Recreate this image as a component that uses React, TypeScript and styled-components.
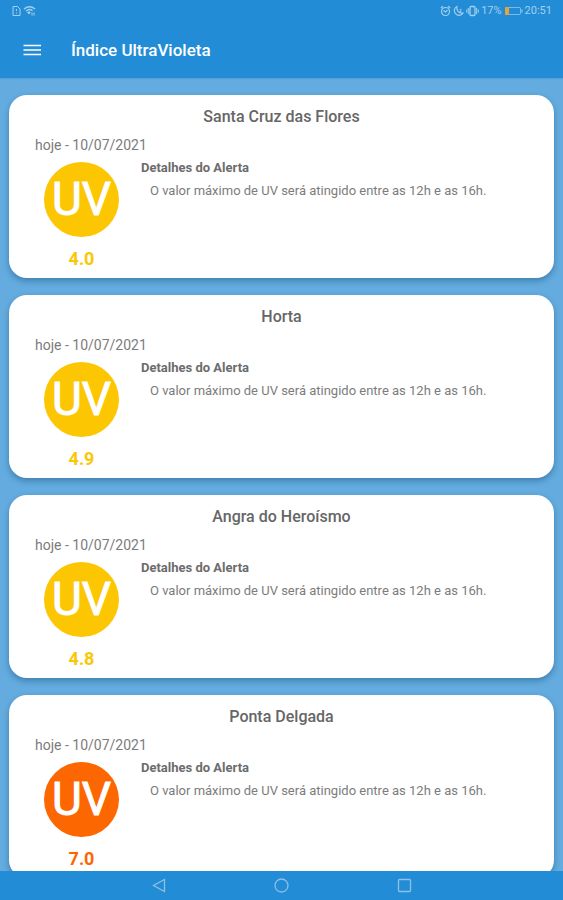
import React from "react";
import styled, { createGlobalStyle } from "styled-components";

const GlobalStyle = createGlobalStyle`
  *, *::before, *::after { box-sizing: border-box; }
  body { margin: 0; background: #64acdf; font-family: Roboto, "Liberation Sans", sans-serif; }
  h1, h2, h3, p { margin: 0; }
  button { padding: 0; border: 0; background: none; color: inherit; cursor: pointer; }
  svg { display: block; }
`;

const Screen = styled.div`
  display: flex;
  flex-direction: column;
  height: 100vh;
  overflow: hidden;
`;

const Header = styled.header`
  flex: none;
  background: #228dd6;
  color: #fff;
  box-shadow: 0 1px 1px rgba(20, 90, 150, 0.15);
`;

const StatusBar = styled.div`
  display: flex;
  justify-content: space-between;
  align-items: center;
  height: 22px;
  padding: 0 11px 0 12px;
  color: #a3cfee;
  font-size: 11px;
  line-height: 22px;
`;

const StatusGroup = styled.div`
  display: flex;
  align-items: center;
  gap: 2px;
`;

const AppBar = styled.div`
  display: flex;
  align-items: center;
  gap: 26px;
  height: 56px;
  padding: 0 19px;
`;

const MenuButton = styled.button`
  width: 26px;
  height: 26px;
`;

const AppTitle = styled.h1`
  font-size: 17px;
  font-weight: 500;
  line-height: 24px;
`;

const List = styled.main`
  flex: 1;
  min-height: 0;
  display: flex;
  flex-direction: column;
  gap: 17px;
  padding: 17px 9px;
  overflow: hidden;
`;

const Card = styled.article`
  flex: none;
  padding: 10px 20px 7px 26px;
  border-radius: 18px;
  background: #fff;
  color: #7c7c7c;
  box-shadow: 0 3px 6px rgba(20, 70, 120, 0.45);
`;

const City = styled.h2`
  padding-right: 6px;
  color: #666;
  font-size: 16px;
  font-weight: 500;
  line-height: 24px;
  text-align: center;
`;

const DateLine = styled.p`
  margin-top: 6px;
  font-size: 14px;
  line-height: 20px;
`;

const Body = styled.div`
  display: flex;
  gap: 13px;
`;

const Reading = styled.div<{ $color: string }>`
  display: flex;
  flex-direction: column;
  align-items: center;
  width: 93px;
  padding-top: 7px;
  color: ${(p) => p.$color};
`;

const Badge = styled.div<{ $color: string }>`
  display: flex;
  justify-content: center;
  align-items: center;
  width: 75px;
  height: 75px;
  border-radius: 50%;
  background: ${(p) => p.$color};
  color: #fff;
  font-size: 46px;
  line-height: 75px;
  -webkit-text-stroke: 1px #fff;
`;

const Value = styled.strong`
  margin-top: 10px;
  font-size: 18px;
  font-weight: 700;
  line-height: 24px;
`;

const Details = styled.div`
  flex: 1;
  padding-top: 3px;
  font-size: 13px;
  line-height: 20px;
`;

const DetailsTitle = styled.h3`
  color: #6c6c6c;
  font-size: 13px;
  font-weight: 700;
`;

const DetailsText = styled.p`
  margin-top: 3px;
  padding-left: 9px;
`;

const NavBar = styled.nav`
  flex: none;
  display: flex;
  justify-content: center;
  align-items: center;
  gap: 99px;
  height: 29px;
  background: #228dd6;
  color: #92bfe2;
`;

const NavButton = styled.button`
  width: 24px;
  height: 24px;
  display: grid;
  place-items: center;
`;

const SimIcon = () => (
  <svg width="9" height="12" viewBox="0 0 9 12" fill="none" stroke="currentColor">
    <path d="M1 1.5H5.5L8 4V10.5H1Z" />
    <path d="M4.5 4V6M4.5 7.5V8.5" />
  </svg>
);

const WifiIcon = () => (
  <svg width="13" height="12" viewBox="0 0 13 12" fill="none" stroke="currentColor">
    <path d="M1 4Q6.500 -0.500 12 4M3 6Q6.500 3.200 9.500 5.800" strokeWidth="1.400" />
    <path d="M4.500 7.300Q6 6.300 7.200 7.200L6 9Z" fill="currentColor" />
    <path d="M9 7.500V10.500M11 7.500V10.500" />
  </svg>
);

const AlarmIcon = () => (
  <svg width="11" height="12" viewBox="0 0 11 12" fill="none" stroke="currentColor" strokeWidth="1.200">
    <circle cx="5.500" cy="6.500" r="4" />
    <path d="M0.800 3L3 1.200M10.200 3L8 1.200M3.500 5.500L5.500 7L7.500 5.200" />
  </svg>
);

const MoonIcon = () => (
  <svg width="11" height="12" viewBox="0 0 11 12" fill="none" stroke="currentColor" strokeWidth="1.200">
    <path d="M4 1.500C0.500 3 0.500 7.500 3.500 9.500C6 11 9 10.200 10 8C6 8.700 3.200 6 4 1.500Z" />
    <path d="M6.500 4.500H8.500L6.500 6.500H8.500" strokeWidth="0.700" />
  </svg>
);

const VibrateIcon = () => (
  <svg width="13" height="12" viewBox="0 0 13 12" fill="none" stroke="currentColor">
    <rect x="4" y="1.500" width="5" height="9" rx="1" strokeWidth="1.300" />
    <path d="M2.300 3V9M0.700 4.500V7.500M10.700 3V9M12.300 4.500V7.500" />
  </svg>
);

const BatteryIcon = () => (
  <svg width="19" height="10" viewBox="0 0 19 10" fill="none" stroke="currentColor">
    <rect x="1.500" y="1.500" width="15" height="7" rx="1" strokeOpacity="0.700" />
    <path d="M18 3.500V6.500" />
    <rect x="1" y="1" width="4" height="8" fill="#e5a33f" stroke="none" />
  </svg>
);

const MenuIcon = () => (
  <svg width="26" height="26" viewBox="0 0 26 26" stroke="currentColor" strokeWidth="1.700">
    <path d="M4.500 8.500H22M4.500 13H22M4.500 17.500H22" />
  </svg>
);

const navItems = [
  { label: "Voltar", shape: <path d="M13.500 1.500L2.500 7.500L13.500 13.500Z" /> },
  { label: "Início", shape: <circle cx="7.500" cy="7.500" r="6.500" /> },
  { label: "Recentes", shape: <rect x="1.500" y="1.500" width="12" height="12" rx="1" /> },
];

const YELLOW = "#fcc602";
const ORANGE = "#fd6701";

const readings = [
  { city: "Santa Cruz das Flores", value: "4.0", color: YELLOW },
  { city: "Horta", value: "4.9", color: YELLOW },
  { city: "Angra do Heroísmo", value: "4.8", color: YELLOW },
  { city: "Ponta Delgada", value: "7.0", color: ORANGE },
];

export default function App() {
  return (
    <Screen>
      <GlobalStyle />
      <Header>
        <StatusBar>
          <StatusGroup>
            <SimIcon />
            <WifiIcon />
          </StatusGroup>
          <StatusGroup>
            <AlarmIcon />
            <MoonIcon />
            <VibrateIcon />
            <span>17%</span>
            <BatteryIcon />
            <span>20:51</span>
          </StatusGroup>
        </StatusBar>
        <AppBar>
          <MenuButton aria-label="Menu">
            <MenuIcon />
          </MenuButton>
          <AppTitle>Índice UltraVioleta</AppTitle>
        </AppBar>
      </Header>
      <List>
        {readings.map((r) => (
          <Card key={r.city}>
            <City>{r.city}</City>
            <DateLine>hoje - 10/07/2021</DateLine>
            <Body>
              <Reading $color={r.color}>
                <Badge $color={r.color}>UV</Badge>
                <Value>{r.value}</Value>
              </Reading>
              <Details>
                <DetailsTitle>Detalhes do Alerta</DetailsTitle>
                <DetailsText>O valor máximo de UV será atingido entre as 12h e as 16h.</DetailsText>
              </Details>
            </Body>
          </Card>
        ))}
      </List>
      <NavBar>
        {navItems.map((item) => (
          <NavButton key={item.label} aria-label={item.label}>
            <svg width="15" height="15" viewBox="0 0 15 15" fill="none" stroke="currentColor" strokeWidth="1.300">
              {item.shape}
            </svg>
          </NavButton>
        ))}
      </NavBar>
    </Screen>
  );
}
